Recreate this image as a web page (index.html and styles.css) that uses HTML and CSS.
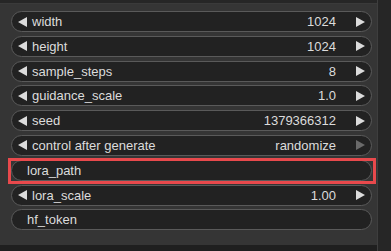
FILE: index.html
```html
<!DOCTYPE html>
<html lang="en">

<head>
  <meta charset="UTF-8">
  <meta name="viewport" content="width=device-width, initial-scale=1.0">
  <title>Node widgets</title>
  <link rel="stylesheet" href="styles.css">
</head>

<body>
  <div class="canvas">
    <div class="node">
      <div class="node-top"></div>
      <div class="widgets">
        <div class="widget number">
          <span class="arrow left"></span>
          <span class="label">width</span>
          <span class="value">1024</span>
          <span class="arrow right"></span>
        </div>
        <div class="widget number">
          <span class="arrow left"></span>
          <span class="label">height</span>
          <span class="value">1024</span>
          <span class="arrow right"></span>
        </div>
        <div class="widget number">
          <span class="arrow left"></span>
          <span class="label">sample_steps</span>
          <span class="value">8</span>
          <span class="arrow right"></span>
        </div>
        <div class="widget number">
          <span class="arrow left"></span>
          <span class="label">guidance_scale</span>
          <span class="value">1.0</span>
          <span class="arrow right"></span>
        </div>
        <div class="widget number">
          <span class="arrow left"></span>
          <span class="label">seed</span>
          <span class="value">1379366312</span>
          <span class="arrow right"></span>
        </div>
        <div class="widget number">
          <span class="arrow left"></span>
          <span class="label">control after generate</span>
          <span class="value">randomize</span>
          <span class="arrow right dim"></span>
        </div>
        <div class="widget text highlighted">
          <span class="label">lora_path</span>
        </div>
        <div class="widget number">
          <span class="arrow left"></span>
          <span class="label">lora_scale</span>
          <span class="value">1.00</span>
          <span class="arrow right"></span>
        </div>
        <div class="widget text">
          <span class="label">hf_token</span>
        </div>
      </div>
      <div class="node-bottom"></div>
    </div>
  </div>
</body>

</html>
```

FILE: styles.css
```css
* {
  margin: 0;
  padding: 0;
  box-sizing: border-box;
}

body {
  background-color: #262626;
  font-family: "Liberation Sans", Arial, sans-serif;
  font-size: 13px;
  color: #dcdcdc;
  overflow: hidden;
}

.canvas {
  width: 391px;
  height: 251px;
  overflow: hidden;
}

.node {
  width: 378px;
  height: 251px;
  background-color: #353535;
  border-right: 1px solid #3e3e3e;
  display: flex;
  flex-direction: column;
}

.node-top {
  height: 4px;
  background-color: #262626;
  border-bottom: 1px solid #3a3a3a;
}

.widgets {
  padding: 7px 5px 0 11px;
  display: flex;
  flex-direction: column;
  gap: 3.8px;
}

.widget {
  height: 21px;
  border: 1px solid #5a5a5a;
  border-radius: 11px;
  background-color: #222222;
  display: flex;
  align-items: center;
  padding: 0 6px 0 6px;
  position: relative;
}

.widget .label {
  flex: 1;
  white-space: nowrap;
}

.widget.text {
  padding-left: 15px;
}

.value {
  margin-right: 20px;
}

.arrow {
  width: 0;
  height: 0;
  border-top: 5px solid transparent;
  border-bottom: 5px solid transparent;
}

.arrow.left {
  border-right: 9px solid #dcdcdc;
  margin-right: 5px;
}

.arrow.right {
  border-left: 9px solid #dcdcdc;
}

.arrow.dim {
  border-left-color: #6a6a6a;
}

.highlighted::after {
  content: "";
  position: absolute;
  top: -3px;
  bottom: -4px;
  left: -4px;
  right: -5px;
  border: 3px solid #e8494c;
}

.node-bottom {
  margin-top: auto;
  height: 6px;
  background-color: #1f1f1f;
}
```
